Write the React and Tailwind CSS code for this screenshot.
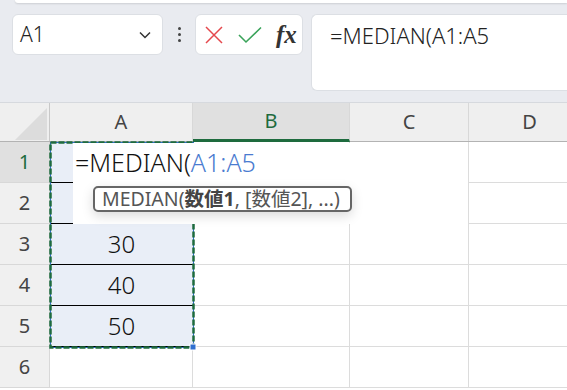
import React from 'react';

const font = { fontFamily: '"Noto Sans", "Noto Sans CJK JP", sans-serif' };

const cols = [
  { key: 'A', w: 'w-[143px]' },
  { key: 'B', w: 'w-[157px]', active: true },
  { key: 'C', w: 'w-[119px]' },
  { key: 'D', w: 'w-[122px]' },
];

const rows = [
  { n: 1, v: '' },
  { n: 2, v: '' },
  { n: 3, v: '30' },
  { n: 4, v: '40' },
  { n: 5, v: '50' },
  { n: 6, v: '' },
];

function Toolbar() {
  return (
    <div className="relative h-[102px] bg-[#e9ebf0]">
      <div className="absolute left-[15px] right-0 top-0 h-[3px] rounded-bl-[6px] bg-white shadow-[0_1px_2px_rgba(0,0,0,0.12)]" />
      <div className="flex items-start pl-[12px] pt-[14px]">
        <div className="flex h-[41px] w-[151px] shrink-0 items-center justify-between rounded-[6px] border border-[#dcdfe4] bg-white pl-[7px] pr-[8px]">
          <span className="text-[21px] font-light text-[#222]">A1</span>
          <svg width="14" height="14" viewBox="0 0 14 14" className="mr-[2px]">
            <path d="M2 4.5 L7 9.5 L12 4.5" fill="none" stroke="#333" strokeWidth="1.5" />
          </svg>
        </div>
        <div className="flex h-[41px] w-[32px] shrink-0 flex-col items-center justify-center gap-[3px]">
          <span className="h-[3px] w-[3px] rounded-full bg-[#444]" />
          <span className="h-[3px] w-[3px] rounded-full bg-[#444]" />
          <span className="h-[3px] w-[3px] rounded-full bg-[#444]" />
        </div>
        <div className="flex h-[41px] w-[108px] shrink-0 items-center rounded-[6px] border border-[#dcdfe4] bg-white pl-[9px]">
          <svg width="18" height="18" viewBox="0 0 18 18">
            <path d="M1 1 L17 17 M17 1 L1 17" stroke="#e5484d" strokeWidth="1.5" />
          </svg>
          <svg width="24" height="18" viewBox="0 0 24 18" className="ml-[15px]">
            <path d="M1 9 L8 16 L23 1.5" fill="none" stroke="#3aa35a" strokeWidth="1.6" />
          </svg>
          <span
            className="ml-[14px] text-[25px] leading-none italic font-bold text-[#333]"
            style={{ fontFamily: '"Liberation Serif", serif' }}
          >
            fx
          </span>
        </div>
        <div className="ml-[8px] h-[77px] flex-1 rounded-l-[6px] border border-r-0 border-[#dcdfe4] bg-white pl-[18px] pt-[4px]">
          <span className="text-[22px] font-light text-[#222]">=MEDIAN(A1:A5</span>
        </div>
      </div>
    </div>
  );
}

function Header() {
  return (
    <div className="flex h-[40px] border-t border-[#d6d9de] border-b border-b-[#b3b3b3] bg-[#efefef]">
      <div className="relative w-[50px] shrink-0 border-r border-[#c8c8c8]">
        <svg className="absolute left-[15px] top-[5px]" width="32" height="32" viewBox="0 0 32 32">
          <path d="M32 0 L32 32 L0 32 Z" fill="#dcdcdc" />
        </svg>
      </div>
      {cols.map((c) => (
        <div
          key={c.key}
          className={`${c.w} flex shrink-0 items-center justify-center border-r border-[#d8d8d8] text-[20px] ${
            c.active ? 'bg-[#e0e0e0] text-[#1e6b3e] border-b-[3px] border-b-[#1e6b3e] -mb-px' : 'text-[#444]'
          }`}
        >
          {c.key}
        </div>
      ))}
    </div>
  );
}

function Row({ n, v }) {
  const sel = n <= 5;
  return (
    <div className="flex h-[41px]">
      <div
        className={`flex w-[50px] shrink-0 items-center justify-center border-r border-b border-[#d8d8d8] text-[20px] ${
          n === 1 ? 'bg-[#e0e0e0] text-[#1e6b3e]' : 'bg-[#f0f0f0] text-[#444]'
        }`}
      >
        {n}
      </div>
      <div
        className={`flex w-[143px] shrink-0 items-center justify-center text-[24px] font-light text-[#111] ${
          sel ? 'bg-[#e9eef7] border-b border-black' : 'border-b border-r border-[#dcdcdc]'
        }`}
      >
        {v}
      </div>
      <div className="w-[157px] shrink-0 border-r border-b border-[#dcdcdc]" />
      <div className="w-[119px] shrink-0 border-r border-b border-[#dcdcdc]" />
      <div className="w-[122px] shrink-0 border-b border-[#dcdcdc]" />
    </div>
  );
}

export default function App() {
  return (
    <div className="relative h-[390px] w-[567px] overflow-hidden bg-white" style={font}>
      <Toolbar />
      <Header />
      {rows.map((r) => (
        <Row key={r.n} {...r} />
      ))}

      {/* copy marquee */}
      <svg className="absolute left-[49px] top-[141px]" width="148" height="212" viewBox="0 0 148 212">
        <rect x="1.5" y="1.5" width="143" height="205" fill="none" stroke="#2f6fcf" strokeWidth="1" />
        <rect x="1.5" y="1.5" width="143" height="205" fill="none" stroke="#1e6b3e" strokeWidth="2.5" strokeDasharray="6 2" />
        <rect x="141" y="203" width="6" height="6" fill="#2f6fcf" stroke="#fff" strokeWidth="1" />
      </svg>

      {/* in-cell editor */}
      <div className="absolute left-[73px] top-[143px] h-[81px] w-[395px] bg-white">
        <div className="pl-[2px] pt-[2px] text-[25px] font-light leading-[34px] text-[#111]">
          =MEDIAN(<span className="text-[#4a7bd0]">A1:A5</span>
        </div>
      </div>

      {/* tooltip */}
      <div className="absolute left-[93px] top-[186px] flex h-[26px] w-[259px] items-center whitespace-nowrap rounded-[5px] border-2 border-[#666] bg-white pl-[7px] text-[19.5px] leading-none text-[#555] shadow-[0_4px_12px_rgba(0,0,0,0.15)]">
        MEDIAN(<b className="text-[#444]">数値1</b>, [数値2], ...)
      </div>
    </div>
  );
}
